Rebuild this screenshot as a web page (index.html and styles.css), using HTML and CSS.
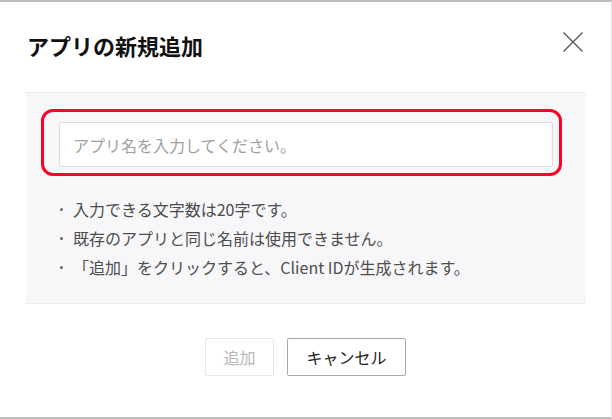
FILE: index.html
```html
<!DOCTYPE html>
<html lang="ja">
<head>
<meta charset="utf-8">
<link rel="stylesheet" href="styles.css">
</head>
<body>
<div class="modal">
  <div class="header">
    <h1 class="title">アプリの新規追加</h1>
    <button class="close" aria-label="閉じる">
      <svg width="20" height="20" viewBox="0 0 20 20"><path d="M0.5 0.5L19.5 19.5M19.5 0.5L0.5 19.5" stroke="#555" stroke-width="1.3" fill="none"/></svg>
    </button>
  </div>
  <div class="panel">
    <div class="field">
      <input class="input" type="text" placeholder="アプリ名を入力してください。">
      <div class="highlight"></div>
    </div>
    <ul class="notes">
      <li>入力できる文字数は20字です。</li>
      <li>既存のアプリと同じ名前は使用できません。</li>
      <li>「追加」をクリックすると、Client IDが生成されます。</li>
    </ul>
  </div>
  <div class="actions">
    <button class="btn btn-add" disabled>追加</button>
    <button class="btn btn-cancel">キャンセル</button>
  </div>
</div>
</body>
</html>
```

FILE: styles.css
```css
* { box-sizing: border-box; }
html, body { margin: 0; padding: 0; background: #fff; }
body {
  font-family: "Noto Sans CJK JP", "Noto Sans", sans-serif;
  color: #333;
}
.modal {
  width: 612px;
  height: 419px;
  border-top: 2px solid #bdbdbd;
  border-bottom: 2px solid #bdbdbd;
  border-right: 1px solid #e4e4e4;
  background: #fff;
}
.header {
  display: flex;
  justify-content: space-between;
  align-items: flex-start;
  padding: 28px 28px 0 27px;
  height: 90px;
}
.title {
  margin: 0;
  font-size: 22px;
  line-height: 30px;
  font-weight: 700;
  color: #111;
}
.close {
  margin: 2px 0 0 0;
  padding: 0;
  border: none;
  background: none;
  width: 20px;
  height: 20px;
  display: block;
}
.close svg { display: block; }
.panel {
  margin: 0 25px 0 26px;
  background: #f7f7f9;
  border-top: 1px solid #ebebeb;
  border-bottom: 1px solid #ebebeb;
  padding: 29px 33px 21px 33px;
}
.field { position: relative; }
.input {
  display: block;
  width: 100%;
  height: 45px;
  border: 1px solid #dcdcdc;
  border-radius: 2px;
  background: #fff;
  padding: 0 13px;
  font-family: inherit;
  font-size: 16px;
  color: #333;
  outline: none;
}
.input::placeholder { color: #a0a0a0; }
.highlight {
  position: absolute;
  left: -18px;
  top: -13px;
  width: 521px;
  height: 67px;
  border: 3px solid #ff0026;
  border-radius: 12px;
  pointer-events: none;
}
.notes {
  list-style: none;
  margin: 28px 0 0 0;
  padding: 0 0 0 1px;
  font-size: 16px;
  line-height: 29px;
  color: #4d4d4d;
}
.notes li {
  display: flex;
  align-items: center;
}
.notes li::before {
  content: "";
  width: 3px;
  height: 3px;
  border-radius: 50%;
  background: #666;
  margin-right: 10px;
  flex: none;
}
.actions {
  display: flex;
  justify-content: center;
  gap: 13px;
  padding-top: 34px;
}
.btn {
  height: 38px;
  font-family: inherit;
  font-size: 16px;
  border-radius: 2px;
  background: #fff;
  padding: 0;
}
.btn-add {
  width: 69px;
  border: 1px solid #e6e6e6;
  color: #b8b8b8;
}
.btn-cancel {
  width: 119px;
  border: 1px solid #a9a9a9;
  color: #222;
}
```
